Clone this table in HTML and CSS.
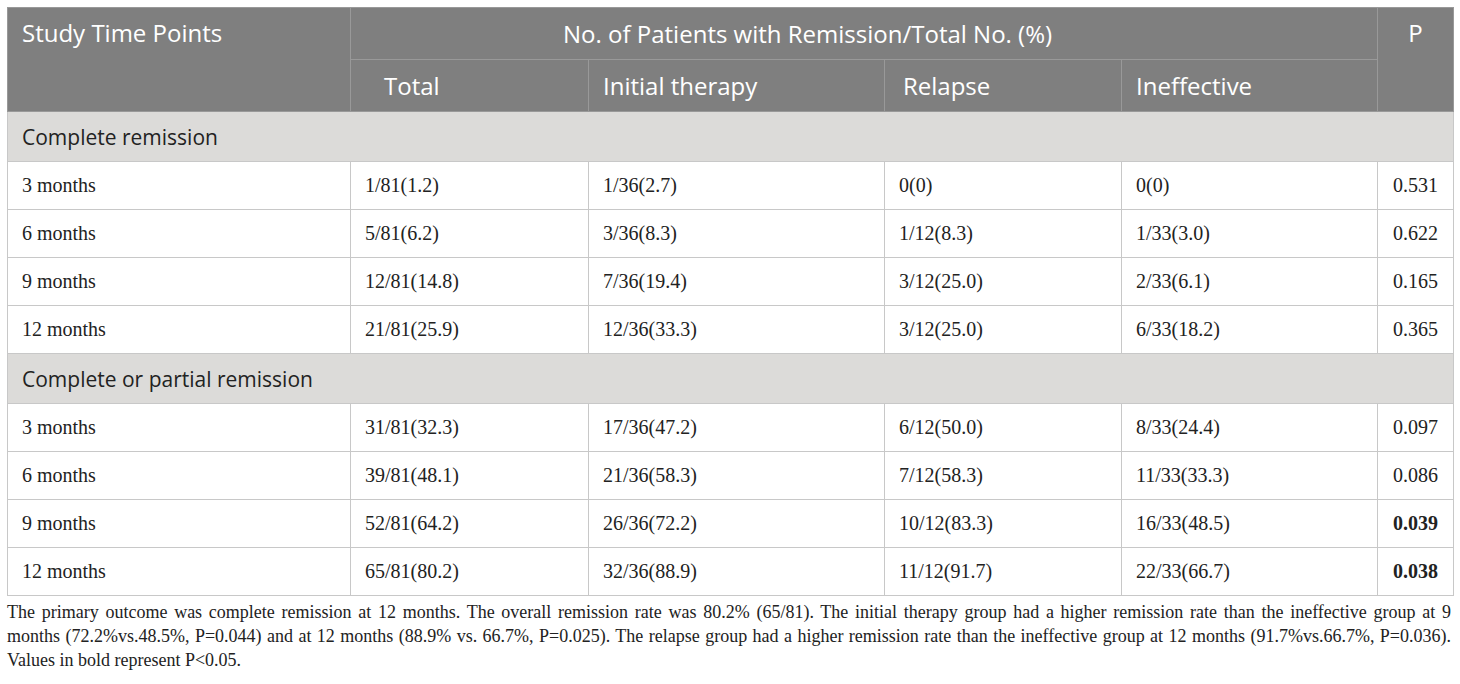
FILE: index.html
```html
<!DOCTYPE html>
<html lang="en">
<head>
  <meta charset="UTF-8">
  <title>Remission by Study Time Points</title>
  <link rel="stylesheet" href="styles.css">
</head>
<body>
  <div class="wrap">
    <table class="results">
      <colgroup>
        <col class="c-time">
        <col class="c-total">
        <col class="c-initial">
        <col class="c-relapse">
        <col class="c-ineff">
        <col class="c-p">
      </colgroup>
      <thead>
        <tr>
          <th rowspan="2" class="top">Study Time Points</th>
          <th colspan="4" class="group">No. of Patients with Remission/Total No. (%)</th>
          <th rowspan="2" class="top center">P</th>
        </tr>
        <tr>
          <th class="indent">Total</th>
          <th>Initial therapy</th>
          <th class="pad-r">Relapse</th>
          <th>Ineffective</th>
        </tr>
      </thead>
      <tbody>
        <tr class="section"><td colspan="6">Complete remission</td></tr>
        <tr><td>3 months</td><td>1/81(1.2)</td><td>1/36(2.7)</td><td>0(0)</td><td>0(0)</td><td class="p">0.531</td></tr>
        <tr><td>6 months</td><td>5/81(6.2)</td><td>3/36(8.3)</td><td>1/12(8.3)</td><td>1/33(3.0)</td><td class="p">0.622</td></tr>
        <tr><td>9 months</td><td>12/81(14.8)</td><td>7/36(19.4)</td><td>3/12(25.0)</td><td>2/33(6.1)</td><td class="p">0.165</td></tr>
        <tr><td>12 months</td><td>21/81(25.9)</td><td>12/36(33.3)</td><td>3/12(25.0)</td><td>6/33(18.2)</td><td class="p">0.365</td></tr>
        <tr class="section"><td colspan="6">Complete or partial remission</td></tr>
        <tr><td>3 months</td><td>31/81(32.3)</td><td>17/36(47.2)</td><td>6/12(50.0)</td><td>8/33(24.4)</td><td class="p">0.097</td></tr>
        <tr><td>6 months</td><td>39/81(48.1)</td><td>21/36(58.3)</td><td>7/12(58.3)</td><td>11/33(33.3)</td><td class="p">0.086</td></tr>
        <tr><td>9 months</td><td>52/81(64.2)</td><td>26/36(72.2)</td><td>10/12(83.3)</td><td>16/33(48.5)</td><td class="p"><b>0.039</b></td></tr>
        <tr><td>12 months</td><td>65/81(80.2)</td><td>32/36(88.9)</td><td>11/12(91.7)</td><td>22/33(66.7)</td><td class="p"><b>0.038</b></td></tr>
      </tbody>
    </table>
    <div class="notes">
      <p class="full">The primary outcome was complete remission at 12 months. The overall remission rate was 80.2% (65/81). The initial therapy group had a higher remission rate than the ineffective group at 9<br>months (72.2%vs.48.5%, P=0.044) and at 12 months (88.9% vs. 66.7%, P=0.025). The relapse group had a higher remission rate than the ineffective group at 12 months (91.7%vs.66.7%, P=0.036).</p>
      <p>Values in bold represent P&lt;0.05.</p>
    </div>
  </div>
</body>
</html>
```

FILE: styles.css
```css
body {
  margin: 0;
  background: #fff;
  color: #222;
}

.wrap {
  padding: 7px 7px 0 7px;
}

table.results {
  width: 1446px;
  border-collapse: collapse;
  table-layout: fixed;
  border: 1px solid #c4c4c4;
}

.c-time { width: 343px; }
.c-total { width: 238px; }
.c-initial { width: 296px; }
.c-relapse { width: 237px; }
.c-ineff { width: 256px; }
.c-p { width: 76px; }

th {
  background-color: #7f7f7f;
  color: #fff;
  font-family: "Open Sans", "Noto Sans", sans-serif;
  font-weight: normal;
  font-size: 24px;
  line-height: 32px;
  text-align: left;
  padding: 0 14px;
  height: 51px;
  border: 1px solid #999;
}

th.top {
  vertical-align: top;
  padding-top: 9px;
}

th.center {
  text-align: center;
}

th.group {
  padding-left: 212px;
}

th.indent {
  padding-left: 33px;
}

th.pad-r {
  padding-left: 18px;
}

td {
  font-family: "Liberation Serif", "Times New Roman", serif;
  font-size: 20px;
  color: #222;
  padding: 0 14px;
  height: 47px;
  border: 1px solid #c8c8c8;
}

td.p {
  padding-left: 15px;
}

tr.section td {
  background-color: #dcdbd9;
  font-family: "Open Sans", "Noto Sans", sans-serif;
  font-size: 21px;
  height: 49px;
  color: #222;
}

.notes {
  width: 1444px;
  margin-top: 4px;
  font-family: "Liberation Serif", "Times New Roman", serif;
  font-size: 18px;
  line-height: 24px;
  color: #222;
}

.notes p {
  margin: 0;
}

.notes p.full {
  text-align: justify;
  text-align-last: justify;
}
```
